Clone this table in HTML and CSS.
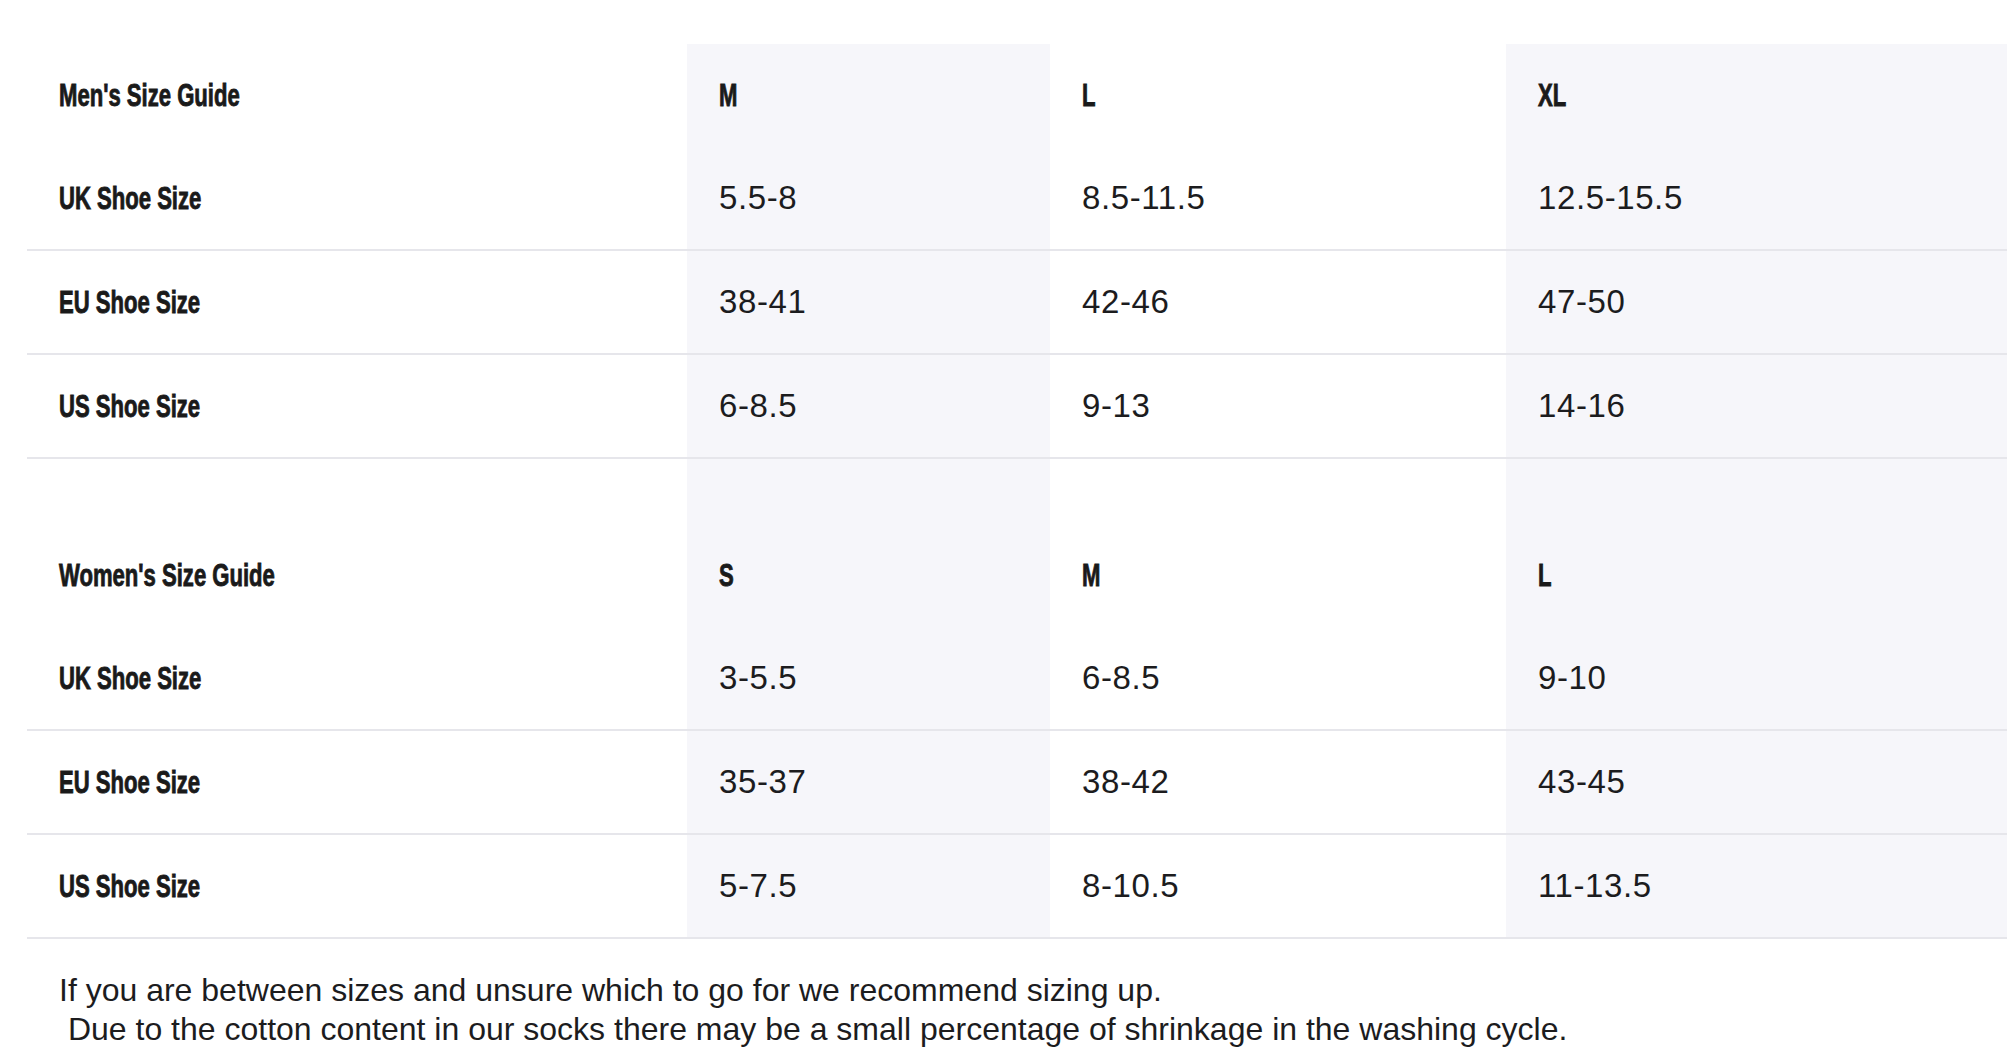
FILE: index.html
```html
<!DOCTYPE html>
<html lang="en">
<head>
<meta charset="utf-8">
<title>Size Guide</title>
<link rel="stylesheet" href="styles.css">
</head>
<body>
<div class="page">
  <table class="size-table">
    <colgroup>
      <col class="c-label">
      <col class="c-a">
      <col class="c-b">
      <col class="c-c">
    </colgroup>
    <tbody>
      <tr class="head-row">
        <td class="label"><span class="cond">Men's Size Guide</span></td>
        <td class="shade"><span class="cond">M</span></td>
        <td><span class="cond">L</span></td>
        <td class="shade"><span class="cond">XL</span></td>
      </tr>
      <tr class="data-row">
        <td class="label"><span class="cond">UK Shoe Size</span></td>
        <td class="shade">5.5-8</td>
        <td>8.5-11.5</td>
        <td class="shade">12.5-15.5</td>
      </tr>
      <tr class="data-row">
        <td class="label"><span class="cond">EU Shoe Size</span></td>
        <td class="shade">38-41</td>
        <td>42-46</td>
        <td class="shade">47-50</td>
      </tr>
      <tr class="data-row">
        <td class="label"><span class="cond">US Shoe Size</span></td>
        <td class="shade">6-8.5</td>
        <td>9-13</td>
        <td class="shade">14-16</td>
      </tr>
      <tr class="spacer-row">
        <td></td>
        <td class="shade"></td>
        <td></td>
        <td class="shade"></td>
      </tr>
      <tr class="head-row">
        <td class="label"><span class="cond">Women's Size Guide</span></td>
        <td class="shade"><span class="cond">S</span></td>
        <td><span class="cond">M</span></td>
        <td class="shade"><span class="cond">L</span></td>
      </tr>
      <tr class="data-row">
        <td class="label"><span class="cond">UK Shoe Size</span></td>
        <td class="shade">3-5.5</td>
        <td>6-8.5</td>
        <td class="shade">9-10</td>
      </tr>
      <tr class="data-row">
        <td class="label"><span class="cond">EU Shoe Size</span></td>
        <td class="shade">35-37</td>
        <td>38-42</td>
        <td class="shade">43-45</td>
      </tr>
      <tr class="data-row">
        <td class="label"><span class="cond">US Shoe Size</span></td>
        <td class="shade">5-7.5</td>
        <td>8-10.5</td>
        <td class="shade">11-13.5</td>
      </tr>
    </tbody>
  </table>
  <p class="note">If you are between sizes and unsure which to go for we recommend sizing up.<br>&nbsp;Due to the cotton content in our socks there may be a small percentage of shrinkage in the washing cycle.</p>
</div>
</body>
</html>
```
FILE: styles.css
```css
html, body {
  margin: 0;
  padding: 0;
  background: #ffffff;
}

body {
  font-family: "Liberation Sans", Arial, sans-serif;
  color: #1c1c1e;
}

.page {
  padding: 44px 7px 0 27px;
}

.size-table {
  width: 1980px;
  table-layout: fixed;
  border-collapse: separate;
  border-spacing: 0;
}

.c-label { width: 660px; }
.c-a { width: 363px; }
.c-b { width: 456px; }
.c-c { width: 501px; }

.size-table td {
  padding: 0 0 0 32px;
  font-size: 33px;
  letter-spacing: 0.6px;
  line-height: 102px;
  height: 102px;
  white-space: nowrap;
  vertical-align: top;
  overflow: hidden;
}

.size-table td.label,
.head-row td {
  font-size: 32px;
  letter-spacing: 0;
}

.head-row td {
  line-height: 103px;
  height: 103px;
}

.size-table td.shade {
  background: #f6f6fa;
}

.data-row td {
  border-bottom: 2px solid #e6e6eb;
}

.spacer-row td {
  height: 65px;
  line-height: 65px;
  padding: 0;
}

.cond {
  display: inline-block;
  font-weight: 700;
  transform: scaleX(0.69);
  transform-origin: left center;
  color: #1a1a1a;
  -webkit-text-stroke: 0.9px #1a1a1a;
}

.note {
  margin: 32px 0 0 0;
  padding-left: 32px;
  font-size: 32px;
  line-height: 39px;
}
```
